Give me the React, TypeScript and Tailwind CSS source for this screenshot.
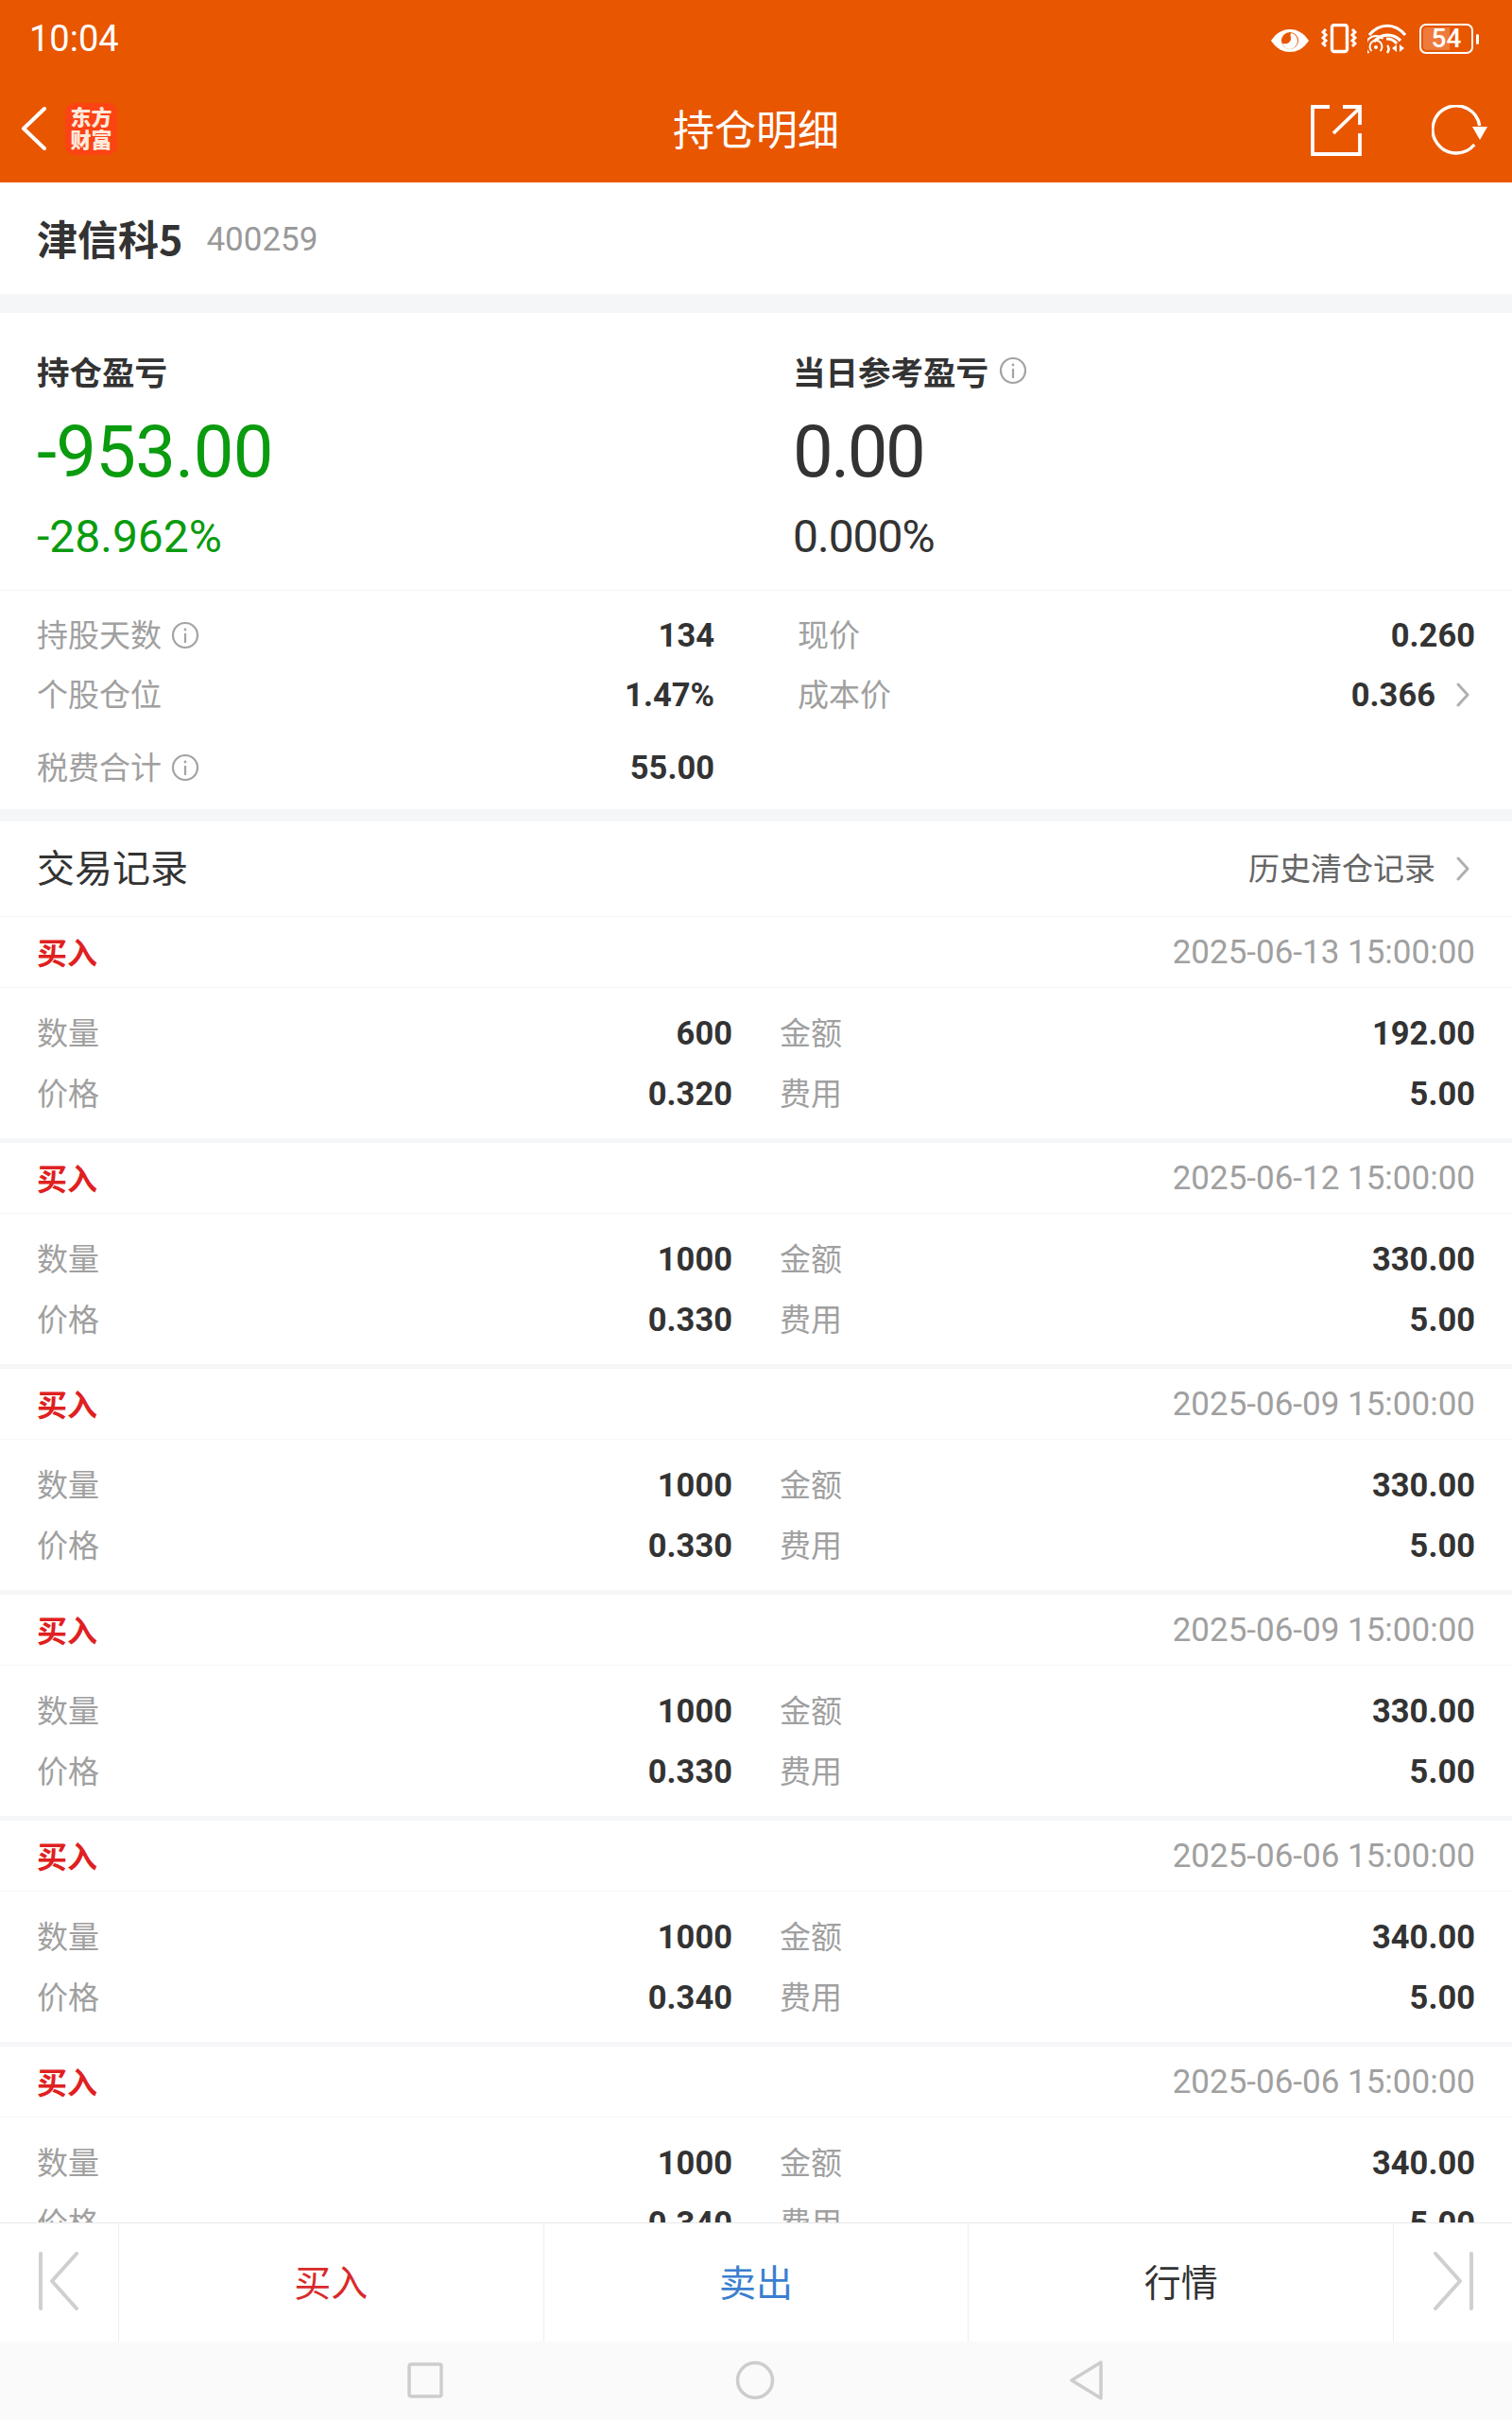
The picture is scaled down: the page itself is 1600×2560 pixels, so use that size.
import React from "react";

const num = "font-['Roboto','Noto_Sans_CJK_SC',sans-serif]";

function Info({ className = "" }: { className?: string }) {
  return (
    <svg viewBox="0 0 30 30" className={"w-[30px] h-[30px] shrink-0 " + className} fill="none" stroke="#a3a3a3" strokeWidth="2.2">
      <circle cx="15" cy="15" r="13" />
      <circle cx="15" cy="9" r="1.4" fill="#a3a3a3" stroke="none" />
      <path d="M15 13v10" />
    </svg>
  );
}

function Chevron({ className = "" }: { className?: string }) {
  return (
    <svg viewBox="0 0 16 26" className={"w-[16px] h-[26px] shrink-0 " + className} fill="none" stroke="#b0b0b0" strokeWidth="3" strokeLinecap="round" strokeLinejoin="round">
      <path d="M3 2l10 11L3 24" />
    </svg>
  );
}

function StatusIcons() {
  return (
    <div className="flex items-center">
      <svg viewBox="0 0 40 24" className="w-[40px] h-[24px] mt-[4px]">
        <path d="M0 12C6 3 13 0 20 0s14 3 20 12c-6 9-13 12-20 12S6 21 0 12z" fill="#fff" />
        <circle cx="20" cy="12" r="9" fill="#e85600" />
        <path d="M21 4a8 8 0 0 1 7 8c0 5-4 9-8 9-4 0-7-3-8-6 5 1 9-1 9-5 0-2-1-4 0-6z" fill="#fff" />
      </svg>
      <svg viewBox="0 0 38 32" className="w-[38px] h-[32px] ml-[13px]" fill="none" stroke="#fff" strokeWidth="3">
        <rect x="11.5" y="1.5" width="16" height="28" rx="2.5" strokeWidth="3.4" />
        <path d="M5 6L2 9l3 3-3 3 3 3-3 3 3 3" />
        <path d="M33 6l3 3-3 3 3 3-3 3 3 3-3 3" />
      </svg>
      <svg viewBox="0 0 42 32" className="w-[42px] h-[32px] ml-[11px]" fill="none" stroke="#fff" strokeWidth="3.2">
        <path d="M2 12C13 -1 29 -1 40 12" />
        <path d="M7 19c8-9 20-9 28-1" />
        <path d="M20 16c5 0 8 1 11 5" />
        <circle cx="9" cy="25" r="2" fill="#fff" stroke="none" />
        <path d="M4.5 29a6.5 6.5 0 1 1 9 0" strokeWidth="2" />
        <path d="M1.5 31a10.5 10.5 0 0 1 15-15" strokeWidth="2" />
        <path d="M21 23c2 2 2 5 0 8" strokeWidth="2.4" />
        <path d="M31 22v8l-5-4zM34 22v8l5-4z" fill="#fff" stroke="none" />
      </svg>
      <div className="ml-[13px] flex items-center">
        <div className="relative w-[57px] h-[32px] rounded-[7px] border-[2px] border-[#fff] overflow-hidden flex items-center justify-center">
          <div className="absolute left-[2px] top-[2px] bottom-[2px] w-[28px] rounded-l-[4px] bg-[#ee7a3c]" />
          <span className={"relative text-white text-[28px] leading-none font-medium " + num}>54</span>
        </div>
        <div className="ml-[3px] w-[3px] h-[11px] bg-white rounded-full" />
      </div>
    </div>
  );
}

function Header() {
  return (
    <div className="bg-[#e85600] h-[193px] shrink-0 text-white flex flex-col">
      <div className="h-[82px] flex items-center justify-between pl-[31px] pr-[35px]">
        <span className={"text-[38px] leading-none " + num}>10:04</span>
        <StatusIcons />
      </div>
      <div className="relative flex-1 flex items-center justify-between pl-[22px] pr-[25px]">
        <div className="flex items-center pb-[3px]">
          <svg viewBox="0 0 28 46" className="w-[28px] h-[46px]" fill="none" stroke="#fff" strokeWidth="4" strokeLinecap="round" strokeLinejoin="round">
            <path d="M25 2L3 23l22 21" />
          </svg>
          <div className="relative z-10 ml-[19px] w-[55px] h-[55px] pb-[5px] rounded-[10px] bg-[#fb4314] flex flex-col items-center justify-center text-[22px] leading-[24px] font-black font-['Noto_Sans_CJK_SC',sans-serif] text-[#ffe9dc]">
            <span>东方</span>
            <span>财富</span>
          </div>
        </div>
        <div className="absolute inset-0 pb-[5px] flex items-center justify-center text-[44px] font-['Noto_Sans_CJK_SC',sans-serif]">持仓明细</div>
        <div className="relative flex items-center">
          <svg viewBox="0 0 54 54" className="w-[54px] h-[54px]" fill="none" stroke="#fff" strokeWidth="3.8">
            <path d="M20 2H2v50h50V30" />
            <path d="M24 30L51 4" />
            <path d="M34 2h18v19" />
          </svg>
          <svg viewBox="0 0 60 54" className="w-[60px] h-[54px] ml-[74px]" fill="none">
            <path d="M45.2 42A25 25 0 1 1 50.7 22" stroke="#fff" strokeWidth="3.4" />
            <path d="M43 23h16l-8 14z" fill="#fff" />
          </svg>
        </div>
      </div>
    </div>
  );
}

function StatLabel({ children }: { children: React.ReactNode }) {
  return <span className="text-[33px] leading-none pb-[4px] text-[#a0a0a0]">{children}</span>;
}

function Value({ children }: { children: React.ReactNode }) {
  return <span className={"text-[34.5px] leading-none font-bold text-[#333] " + num}>{children}</span>;
}

function Summary() {
  return (
    <div className="bg-white shrink-0">
      <div className="h-[118px] flex items-center pl-[39px]">
        <span className="text-[43px] leading-none pb-[2px] font-bold text-[#333]">津信科5</span>
        <span className={"ml-[25px] pt-[2px] text-[35px] leading-none text-[#999] " + num}>400259</span>
      </div>
      <div className="h-[20px] bg-[#f5f6f8]" />
      <div className="h-[294px] grid grid-cols-[800px_1fr] pl-[39px] pr-[39px] pt-[43px] border-b border-[#f4f4f4]">
        <div>
          <div className="text-[34.5px] leading-[36px] font-bold text-[#333]">持仓盈亏</div>
          <div className={"mt-[23px] text-[76px] leading-[90px] tracking-[-0.7px] text-[#0a9b0f] " + num}>-953.00</div>
          <div className={"mt-[17px] text-[48px] leading-[56px] text-[#0a9b0f] " + num}>-28.962%</div>
        </div>
        <div>
          <div className="flex items-center text-[34.5px] leading-[36px] font-bold text-[#333]">
            当日参考盈亏
            <Info className="ml-[11px]" />
          </div>
          <div className={"mt-[23px] text-[76px] leading-[90px] tracking-[-2.5px] text-[#333] " + num}>0.00</div>
          <div className={"mt-[17px] text-[48px] leading-[56px] tracking-[-1px] text-[#333] " + num}>0.000%</div>
        </div>
      </div>
      <div className="h-[231px] pl-[39px] pr-[39px] pt-[16px] grid grid-cols-[717px_1fr] content-start">
        <div className="h-[62px] flex items-center justify-between">
          <span className="flex items-center">
            <StatLabel>持股天数</StatLabel>
            <Info className="ml-[10px]" />
          </span>
          <Value>134</Value>
        </div>
        <div className="h-[62px] flex items-center justify-between pl-[88px]">
          <StatLabel>现价</StatLabel>
          <Value>0.260</Value>
        </div>
        <div className="h-[64px] flex items-center justify-between">
          <StatLabel>个股仓位</StatLabel>
          <Value>1.47%</Value>
        </div>
        <div className="h-[64px] flex items-center justify-between pl-[88px]">
          <StatLabel>成本价</StatLabel>
          <span className="flex items-center">
            <Value>0.366</Value>
            <Chevron className="ml-[21px] mr-[5px]" />
          </span>
        </div>
        <div className="h-[90px] flex items-center justify-between">
          <span className="flex items-center">
            <StatLabel>税费合计</StatLabel>
            <Info className="ml-[10px]" />
          </span>
          <Value>55.00</Value>
        </div>
      </div>
      <div className="h-[13px] bg-[#f5f6f8]" />
    </div>
  );
}

type Trade = { time: string; qty: string; amount: string; price: string };

const trades: Trade[] = [
  { time: "2025-06-13 15:00:00", qty: "600", amount: "192.00", price: "0.320" },
  { time: "2025-06-12 15:00:00", qty: "1000", amount: "330.00", price: "0.330" },
  { time: "2025-06-09 15:00:00", qty: "1000", amount: "330.00", price: "0.330" },
  { time: "2025-06-09 15:00:00", qty: "1000", amount: "330.00", price: "0.330" },
  { time: "2025-06-06 15:00:00", qty: "1000", amount: "340.00", price: "0.340" },
  { time: "2025-06-06 15:00:00", qty: "1000", amount: "340.00", price: "0.340" },
];

function TradeRow({ t }: { t: Trade }) {
  return (
    <div className="h-[239px] shrink-0 flex flex-col">
      <div className="h-[75px] shrink-0 flex items-center justify-between px-[39px] border-b border-[#f6f6f6]">
        <span className="text-[32px] leading-none pb-[3px] font-bold text-[#e02020]">买入</span>
        <span className={"text-[35px] leading-none text-[#a0a0a0] " + num}>{t.time}</span>
      </div>
      <div className="flex-1 grid grid-cols-[736px_1fr] content-start pl-[39px] pr-[39px] pt-[16px]">
        <div className="h-[64px] flex items-center justify-between">
          <StatLabel>数量</StatLabel>
          <Value>{t.qty}</Value>
        </div>
        <div className="h-[64px] flex items-center justify-between pl-[50px]">
          <StatLabel>金额</StatLabel>
          <Value>{t.amount}</Value>
        </div>
        <div className="h-[64px] flex items-center justify-between">
          <StatLabel>价格</StatLabel>
          <Value>{t.price}</Value>
        </div>
        <div className="h-[64px] flex items-center justify-between pl-[50px]">
          <StatLabel>费用</StatLabel>
          <Value>5.00</Value>
        </div>
      </div>
      <div className="h-[5px] shrink-0 bg-[#f5f6f8]" />
    </div>
  );
}

function TradeList() {
  return (
    <div className="flex-1 min-h-0 overflow-hidden bg-white flex flex-col">
      <div className="h-[101px] shrink-0 flex items-center justify-between pl-[39px] pr-[44px] pb-[1px] border-b border-[#f6f6f6]">
        <span className="text-[40px] leading-none pb-[6px] text-[#333]">交易记录</span>
        <span className="flex items-center">
          <span className="text-[33px] leading-none pb-[3px] text-[#666]">历史清仓记录</span>
          <Chevron className="ml-[21px]" />
        </span>
      </div>
      {trades.map((t, i) => (
        <TradeRow key={i} t={t} />
      ))}
    </div>
  );
}

function BottomBar() {
  return (
    <div className="h-[126px] shrink-0 bg-white border-t border-[#e8e8e8] flex text-[39px]">
      <div className="w-[126px] shrink-0 flex items-center justify-center border-r border-[#eeeeee]">
        <svg viewBox="0 0 44 62" className="w-[44px] h-[62px] -ml-[2px] -mt-[4px]" fill="none" stroke="#cfcfcf" strokeWidth="4" strokeLinecap="round" strokeLinejoin="round">
          <path d="M3 2v58" />
          <path d="M41 2L15 31l26 29" />
        </svg>
      </div>
      <div className="flex-1 pb-[5px] flex items-center justify-center border-r border-[#eeeeee] text-[#d92a2a]">买入</div>
      <div className="flex-1 pb-[5px] flex items-center justify-center border-r border-[#eeeeee] text-[#3b7fd0]">卖出</div>
      <div className="flex-1 pb-[5px] flex items-center justify-center border-r border-[#eeeeee] text-[#333]">行情</div>
      <div className="w-[125px] shrink-0 flex items-center justify-center">
        <svg viewBox="0 0 44 62" className="w-[44px] h-[62px] -mt-[4px]" fill="none" stroke="#cfcfcf" strokeWidth="4" strokeLinecap="round" strokeLinejoin="round">
          <path d="M41 2v58" />
          <path d="M3 2l26 29L3 60" />
        </svg>
      </div>
    </div>
  );
}

function NavBar() {
  return (
    <div className="h-[83px] shrink-0 bg-[#fafafa] flex items-center justify-center pb-[1px]">
      <svg viewBox="0 0 38 38" className="w-[38px] h-[38px]" fill="none" stroke="#cdcdcd" strokeWidth="3.5" strokeLinejoin="round">
        <rect x="2" y="2" width="34" height="34" rx="2" />
      </svg>
      <svg viewBox="0 0 42 42" className="w-[42px] h-[42px] ml-[309px]" fill="none" stroke="#cdcdcd" strokeWidth="3.5">
        <circle cx="21" cy="21" r="18.5" />
      </svg>
      <svg viewBox="0 0 38 42" className="w-[38px] h-[42px] ml-[311px]" fill="none" stroke="#cdcdcd" strokeWidth="3.5" strokeLinejoin="round">
        <path d="M34 2v38L3 21z" />
      </svg>
    </div>
  );
}

export default function App() {
  return (
    <div className="w-[1600px] h-[2560px] flex flex-col bg-white overflow-hidden font-['Noto_Sans_CJK_SC',sans-serif]">
      <Header />
      <Summary />
      <TradeList />
      <BottomBar />
      <NavBar />
    </div>
  );
}
